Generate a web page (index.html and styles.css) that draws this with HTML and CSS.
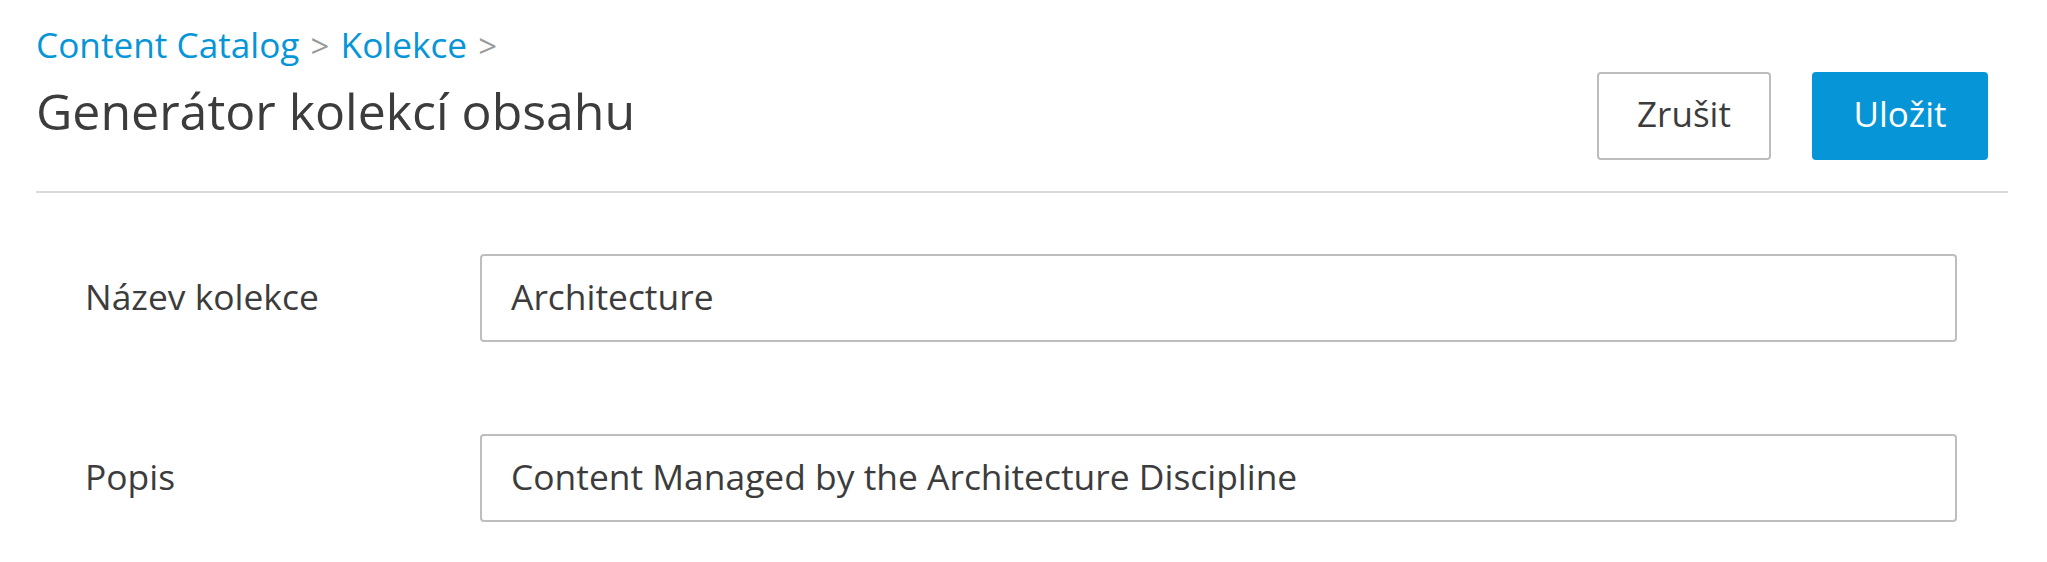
FILE: index.html
```html
<!DOCTYPE html>
<html lang="cs">
<head>
<meta charset="utf-8">
<title>Generátor kolekcí obsahu</title>
<link rel="stylesheet" href="styles.css">
</head>
<body>
<div class="page">
  <header class="header">
    <div class="heading">
      <nav class="breadcrumb">
        <a class="crumb" href="#">Content Catalog</a>
        <span class="sep">&gt;</span>
        <a class="crumb" href="#">Kolekce</a>
        <span class="sep">&gt;</span>
      </nav>
      <h1 class="title">Generátor kolekcí obsahu</h1>
    </div>
    <div class="actions">
      <button class="btn btn-secondary" type="button">Zrušit</button>
      <button class="btn btn-primary" type="button">Uložit</button>
    </div>
  </header>
  <form class="form">
    <div class="row">
      <label class="label" for="name">Název kolekce</label>
      <input class="input" id="name" type="text" value="Architecture">
    </div>
    <div class="row">
      <label class="label" for="desc">Popis</label>
      <input class="input" id="desc" type="text" value="Content Managed by the Architecture Discipline">
    </div>
  </form>
</div>
</body>
</html>
```
FILE: styles.css
```css
* { box-sizing: border-box; }

html, body {
  margin: 0;
  background: #ffffff;
}

body {
  font-family: "Open Sans", "Noto Sans", sans-serif;
  color: #3c3c3c;
}

.page {
  padding: 20px 39px 0 36px;
}

.header {
  display: flex;
  justify-content: space-between;
  align-items: flex-start;
  padding: 0 20px 31px 0;
  border-bottom: 2px solid #dadada;
}

.breadcrumb {
  font-size: 35.2px;
  line-height: 48px;
  white-space: nowrap;
}

.crumb {
  color: #0696d7;
  text-decoration: none;
}

.sep {
  display: inline-block;
  margin: 0 2px;
  font-size: 33px;
  color: #9a9a9a;
}

.title {
  margin: 7px 0 0;
  font-size: 50px;
  line-height: 68px;
  font-weight: 400;
  color: #3c3c3c;
}

.actions {
  display: flex;
  gap: 41px;
  margin-top: 52px;
}

.btn {
  font-family: inherit;
  font-size: 35px;
  line-height: 48px;
  height: 88px;
  padding: 16px 0 20px;
  border-radius: 4px;
  border: 2px solid #bdbdbd;
  cursor: pointer;
  text-align: center;
}

.btn-secondary {
  width: 174px;
  background: #ffffff;
  color: #3c3c3c;
}

.btn-primary {
  width: 176px;
  background: #0696d7;
  border-color: #0696d7;
  color: #ffffff;
}

.form {
  display: flex;
  flex-direction: column;
  gap: 92px;
  margin-top: 61px;
  padding: 0 51px 0 49px;
}

.row {
  display: grid;
  grid-template-columns: 395px 1fr;
  align-items: start;
}

.label {
  padding-top: 18px;
  font-size: 35.4px;
  line-height: 48px;
  color: #3c3c3c;
}

.input {
  display: block;
  width: 100%;
  height: 88px;
  padding: 16px 29px 20px;
  font-family: inherit;
  font-size: 35.4px;
  line-height: 48px;
  color: #3c3c3c;
  background: #ffffff;
  border: 2px solid #bebebe;
  border-radius: 4px;
  outline: none;
}
```
